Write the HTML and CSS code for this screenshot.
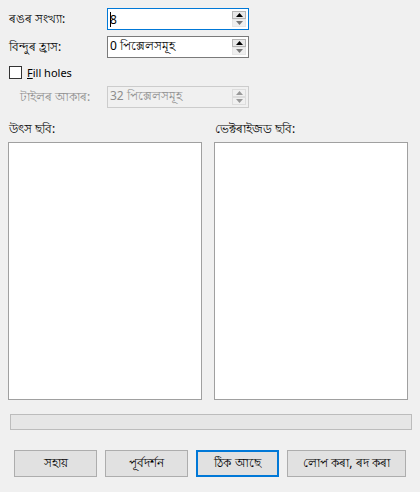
FILE: index.html
```html
<!DOCTYPE html>
<html>
<head>
<meta charset="utf-8">
<link rel="stylesheet" href="styles.css">
</head>
<body>
<div class="dialog">
  <div class="form">
    <label class="lbl">ৰঙৰ সংখ্যা:</label>
    <div class="spin focused">
      <span class="val"><span class="caret"></span>8</span>
      <div class="arrows"><span class="up"><svg width="7" height="4" viewBox="0 0 7 4"><path d="M0 4h7L3.5 0z" fill="#000"/></svg></span><span class="down"><svg width="7" height="4" viewBox="0 0 7 4"><path d="M0 0h7L3.5 4z" fill="#777"/></svg></span></div>
    </div>
    <label class="lbl">বিন্দুৰ হ্ৰাস:</label>
    <div class="spin">
      <span class="val">0 পিক্সেলসমূহ</span>
      <div class="arrows"><span class="up"><svg width="7" height="4" viewBox="0 0 7 4"><path d="M0 4h7L3.5 0z" fill="#000"/></svg></span><span class="down"><svg width="7" height="4" viewBox="0 0 7 4"><path d="M0 0h7L3.5 4z" fill="#777"/></svg></span></div>
    </div>
    <div class="check"><span class="box"></span><span class="latin"><u>F</u>ill holes</span></div>
    <label class="lbl disabled indent">টাইলৰ আকাৰ:</label>
    <div class="spin dis">
      <span class="val">32 পিক্সেলসমূহ</span>
      <div class="arrows"><span class="up"><svg width="7" height="4" viewBox="0 0 7 4"><path d="M0 4h7L3.5 0z" fill="#999"/></svg></span><span class="down"><svg width="7" height="4" viewBox="0 0 7 4"><path d="M0 0h7L3.5 4z" fill="#999"/></svg></span></div>
    </div>
  </div>
  <div class="panels">
    <div class="panel">
      <div class="ptitle">উৎস ছবি:</div>
      <div class="pbox"></div>
    </div>
    <div class="panel">
      <div class="ptitle">ভেক্টৰাইজড ছবি:</div>
      <div class="pbox"></div>
    </div>
  </div>
  <div class="progress"></div>
  <div class="buttons">
    <button class="btn b1">সহায়</button>
    <button class="btn b2">পূৰ্বদৰ্শন</button>
    <button class="btn b3 default">ঠিক আছে</button>
    <button class="btn b4">লোপ কৰা, ৰদ কৰা</button>
  </div>
</div>
</body>
</html>
```
FILE: styles.css
```css
html, body {
  margin: 0;
  padding: 0;
  background: #f0f0f0;
}
body {
  width: 420px;
  height: 492px;
  overflow: hidden;
  font-family: "Noto Sans", "Open Sans", sans-serif;
  font-size: 12px;
  color: #000;
}
.dialog {
  padding: 8px 0 0 0;
  display: flex;
  flex-direction: column;
}
.form {
  display: grid;
  grid-template-columns: 98px 142px;
  row-gap: 6px;
  padding-left: 9px;
  align-items: center;
}
.lbl {
  line-height: 22px;
  white-space: nowrap;
}
.lbl.disabled { color: #8d8d8d; }
.lbl.indent { padding-left: 11px; }
.spin {
  height: 22px;
  box-sizing: border-box;
  border: 1px solid #7a7a7a;
  background: #fff;
  display: flex;
  align-items: center;
  justify-content: space-between;
  padding: 0 1px;
}
.spin.focused { border-color: #0078d7; }
.spin.dis { border-color: #cccccc; color: #8d8d8d; background: #f0f0f0; }
.val { padding-left: 1px; white-space: nowrap; position: relative; }
.caret {
  position: absolute;
  left: 1px;
  top: 1px;
  width: 1px;
  height: 15px;
  background: #000;
}
.arrows {
  display: flex;
  flex-direction: column;
  width: 14px;
  margin-right: 1px;
}
.arrows span {
  height: 8px;
  box-sizing: border-box;
  display: flex;
  align-items: center;
  justify-content: center;
}
.arrows .up { border: 1px solid #b5b5b5; background: #e8e8e8; }
.arrows .down { border: 1px solid #e6e6e6; background: #efefef; }
.spin.dis .arrows .up, .spin.dis .arrows .down { border-color: #dddddd; background: #f0f0f0; }
.check {
  grid-column: 1 / span 2;
  display: flex;
  align-items: center;
  gap: 5px;
  height: 16px;
}
.latin { font-size: 11px; }
.box {
  width: 11px;
  height: 11px;
  border: 1px solid #333;
  background: #fff;
}
.panels {
  display: flex;
  gap: 12px;
  padding: 12px 0 0 8px;
}
.panel {
  width: 194px;
  display: flex;
  flex-direction: column;
}
.ptitle {
  height: 22px;
  line-height: 18px;
  padding-left: 1px;
  white-space: nowrap;
}
.pbox {
  height: 258px;
  box-sizing: border-box;
  border: 1px solid #a0a0a0;
  background: #fff;
}
.progress {
  margin: 14px 0 0 10px;
  width: 402px;
  height: 16px;
  box-sizing: border-box;
  border: 1px solid #bcbcbc;
  background: #e6e6e6;
}
.buttons {
  display: flex;
  padding: 20px 0 0 14px;
  gap: 8px;
}
.btn {
  height: 27px;
  box-sizing: border-box;
  border: 1px solid #adadad;
  background: #e1e1e1;
  font-family: inherit;
  font-size: 12px;
  color: #000;
  padding: 0;
  white-space: nowrap;
}
.b1 { width: 83px; }
.b2 { width: 83px; }
.b3 { width: 83px; }
.b4 { width: 119px; }
.btn.default { border: 2px solid #0078d7; }
```
